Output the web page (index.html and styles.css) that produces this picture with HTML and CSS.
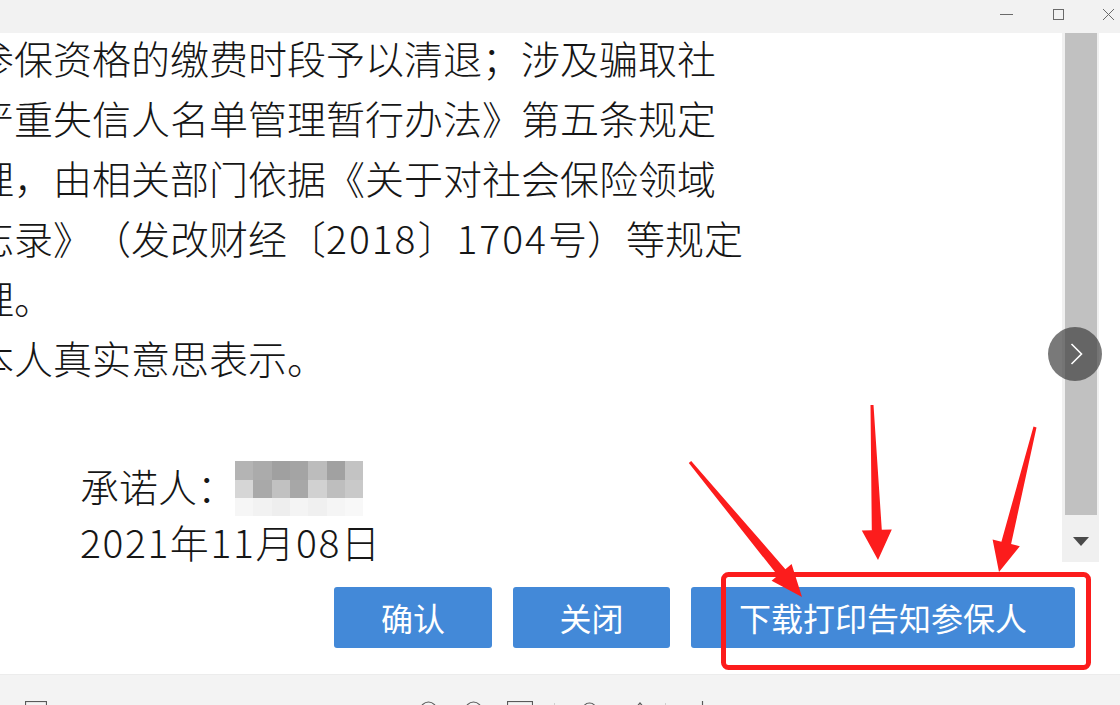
FILE: index.html
```html
<!DOCTYPE html>
<html lang="zh-CN">
<head>
<meta charset="utf-8">
<title>承诺书</title>
<link rel="stylesheet" href="styles.css">
</head>
<body>
<div class="titlebar">
  <svg class="winctl" width="120" height="33" viewBox="0 0 120 33">
    <line x1="0" y1="14.5" x2="13" y2="14.5" />
    <rect x="53.5" y="9.5" width="10" height="10" />
    <line x1="103" y1="9" x2="114" y2="20" />
    <line x1="114" y1="9" x2="103" y2="20" />
  </svg>
</div>

<div class="main">
  <div class="doc">
    <div class="lines">
      <p class="ln">参保资格的缴费时段予以清退；涉及骗取社</p>
      <p class="ln">严重失信人名单管理暂行办法》第五条规定</p>
      <p class="ln">理，由相关部门依据《关于对社会保险领域</p>
      <p class="ln">忘录》（发改财经〔<span class="num">2018</span>〕<span class="num">1704</span>号）等规定</p>
      <p class="ln">理。</p>
      <p class="ln">本人真实意思表示。</p>
    </div>
    <div class="sign">
      <div class="sign-row">
        <span>承诺人：</span>
        <div class="mosaic">
          <i class="m1"></i><i class="m2"></i><i class="m3"></i><i class="m4"></i><i class="m5"></i><i class="m6"></i><i class="m7"></i>
          <i class="n1"></i><i class="n2"></i><i class="n3"></i><i class="n4"></i><i class="n5"></i><i class="n6"></i><i class="n7"></i>
          <i class="o1"></i><i class="o2"></i><i class="o3"></i><i class="o4"></i><i class="o5"></i><i class="o6"></i><i class="o7"></i>
        </div>
      </div>
      <div class="sign-date">2021年11月08日</div>
    </div>
  </div>

  <div class="vscroll">
    <div class="thumb"></div>
    <div class="down">
      <svg width="16" height="9" viewBox="0 0 16 9"><polygon points="0,0 16,0 8,9" /></svg>
    </div>
  </div>

  <div class="actions">
    <button class="btn btn-confirm">确认</button>
    <button class="btn btn-close">关闭</button>
    <button class="btn btn-download">下载打印告知参保人</button>
  </div>

  <button class="next" aria-label="下一页">
    <svg width="54" height="54" viewBox="0 0 54 54"><polyline points="23.5,17 33.5,27 23.5,37" /></svg>
  </button>
</div>

<div class="toolbar">
  <svg class="tb tb-page" width="22" height="10"><rect x="0.5" y="0.5" width="21" height="12" /></svg>
  <svg class="tb tb-zin" width="17" height="10"><circle cx="8.5" cy="9" r="8" /></svg>
  <svg class="tb tb-zout" width="17" height="10"><circle cx="8.5" cy="9" r="8" /></svg>
  <svg class="tb tb-fit" width="26" height="10"><rect x="0.5" y="0.5" width="25" height="14" /></svg>
  <span class="tb-sep"></span>
  <svg class="tb tb-rot" width="15" height="10"><circle cx="7.5" cy="9" r="7" /></svg>
  <svg class="tb tb-up" width="14" height="10"><polyline points="1,9 7,2 13,9" /></svg>
  <span class="tb-sep tb-sep2"></span>
  <svg class="tb tb-add" width="4" height="10"><line x1="1.5" y1="0" x2="1.5" y2="10" /></svg>
</div>

<svg class="annot" width="1120" height="705" viewBox="0 0 1120 705">
  <rect x="723.5" y="574.5" width="365" height="93" rx="5" ry="5" class="annot-box" />
  <polygon class="annot-arrow" points="688.8,463.0 777.8,575.6 771.6,580.7 802,597 791.6,564.1 785.4,569.2 691.2,461.0" />
  <polygon class="annot-arrow" points="870.5,405.1 871.8,530.2 861.8,530.6 878,560 891.8,529.4 881.8,529.8 873.5,404.9" />
  <polygon class="annot-arrow" points="1033.5,426.6 1001.4,541.7 992.6,539.5 999,572 1019.8,546.3 1011.1,544.1 1036.5,427.4" />
</svg>
</body>
</html>
```

FILE: styles.css
```css
html, body {
  margin: 0;
  padding: 0;
}

body {
  width: 1120px;
  height: 705px;
  overflow: hidden;
  position: relative;
  background: #ffffff;
  font-family: "Noto Sans CJK SC", "Microsoft YaHei", sans-serif;
  color: #161616;
  text-spacing-trim: space-all;
}

/* ---------- title bar ---------- */
.titlebar {
  height: 33px;
  background: #f2f2f2;
  display: flex;
  justify-content: flex-end;
}

.winctl line,
.winctl rect {
  stroke: #6a6a6a;
  stroke-width: 1;
  fill: none;
}

/* ---------- main area ---------- */
.main {
  height: 641px;
  display: grid;
  grid-template-columns: 1062px 37px 21px;
  grid-template-rows: 529px 1fr;
  position: relative;
}

.doc {
  grid-column: 1;
  grid-row: 1;
  min-width: 0;
}

.lines {
  margin: -6px 0 0 -25px;
  font-size: 39px;
  font-weight: 300;
  line-height: 60px;
}

.ln {
  margin: 0;
  white-space: nowrap;
}

.num {
  letter-spacing: 2px;
}

.sign {
  margin-top: 70px;
  padding-left: 80px;
  font-size: 39px;
  font-weight: 300;
  line-height: 56px;
}

.sign-row {
  display: flex;
  align-items: flex-start;
  white-space: nowrap;
}

.mosaic {
  display: grid;
  grid-template-columns: repeat(7, 18.3px);
  grid-template-rows: 19px 18px 18px;
  margin: 4px 0 -13px -1px;
}

.mosaic i { display: block; }
.m1 { background: #b4b4b4; }
.m2 { background: #ababab; }
.m3 { background: #a0a0a0; }
.m4 { background: #a4a4a4; }
.m5 { background: #bcbcbc; }
.m6 { background: #a1a1a1; }
.m7 { background: #c3c3c3; }
.n1 { background: #d6d6d6; }
.n2 { background: #a9a9a9; }
.n3 { background: #c1c1c1; }
.n4 { background: #a7a7a7; }
.n5 { background: #d1d1d1; }
.n6 { background: #bebebe; }
.n7 { background: #c9c9c9; }
.o1 { background: #f6f6f6; }
.o2 { background: #f2f2f2; }
.o3 { background: #eeeeee; }
.o4 { background: #f4f4f4; }
.o5 { background: #f0f0f0; }
.o6 { background: #f5f5f5; }
.o7 { background: #f8f8f8; }

.sign-date {
  white-space: nowrap;
  letter-spacing: 1.6px;
}

/* ---------- scrollbar ---------- */
.vscroll {
  grid-column: 2;
  grid-row: 1;
  background: #f0f0f0;
  display: flex;
  flex-direction: column;
}

.thumb {
  height: 482px;
  margin: 0 2px 0 3px;
  background: #c1c1c1;
}

.down {
  flex: 1;
  display: flex;
  align-items: center;
  justify-content: center;
  padding-top: 6px;
}

.down polygon { fill: #4a4a4a; }

/* ---------- buttons ---------- */
.actions {
  grid-column: 1 / 4;
  grid-row: 2;
  display: flex;
  align-items: flex-start;
  gap: 21px;
  padding: 25px 0 0 334px;
}

.btn {
  height: 61px;
  padding: 0;
  border: 0;
  border-radius: 3px;
  background: #4389d8;
  color: #ffffff;
  font-family: "Noto Sans CJK SC", "Microsoft YaHei", sans-serif;
  font-size: 32px;
  line-height: 61px;
}

.btn-confirm { width: 158px; }
.btn-close { width: 157px; }
.btn-download { width: 384px; }

/* next-page floating control */
.next {
  position: absolute;
  left: 1048px;
  top: 294px;
  width: 54px;
  height: 54px;
  padding: 0;
  border: 0;
  border-radius: 50%;
  background: rgba(58, 58, 58, 0.68);
}

.next svg { display: block; }
.next polyline {
  fill: none;
  stroke: #ffffff;
  stroke-width: 1.6;
}

/* ---------- bottom toolbar ---------- */
.toolbar {
  height: 31px;
  box-sizing: border-box;
  background: #f3f3f3;
  border-top: 1px solid #ececec;
  display: flex;
  align-items: flex-start;
  padding-top: 26px;
  overflow: hidden;
}

.tb { display: block; flex: none; }
.tb rect, .tb circle, .tb polyline, .tb line {
  fill: none;
  stroke: #5a5a5a;
  stroke-width: 1.2;
}

.tb-page { margin-left: 25px; }
.tb-zin { margin-left: 373px; }
.tb-zout { margin-left: 28px; }
.tb-fit { margin-left: 25px; }
.tb-sep {
  display: block;
  flex: none;
  width: 1px;
  height: 10px;
  margin-left: 21px;
  margin-top: 2px;
  background: #cfcfcf;
}
.tb-rot { margin-left: 27px; }
.tb-up { margin-left: 36px; }
.tb-sep2 { margin-left: 18px; }
.tb-add { margin-left: 35px; }

/* ---------- annotation overlay ---------- */
.annot {
  position: absolute;
  left: 0;
  top: 0;
  pointer-events: none;
}

.annot-box {
  fill: none;
  stroke: #fc1c1c;
  stroke-width: 5;
}

.annot-arrow {
  fill: #fc1c1c;
}
```
